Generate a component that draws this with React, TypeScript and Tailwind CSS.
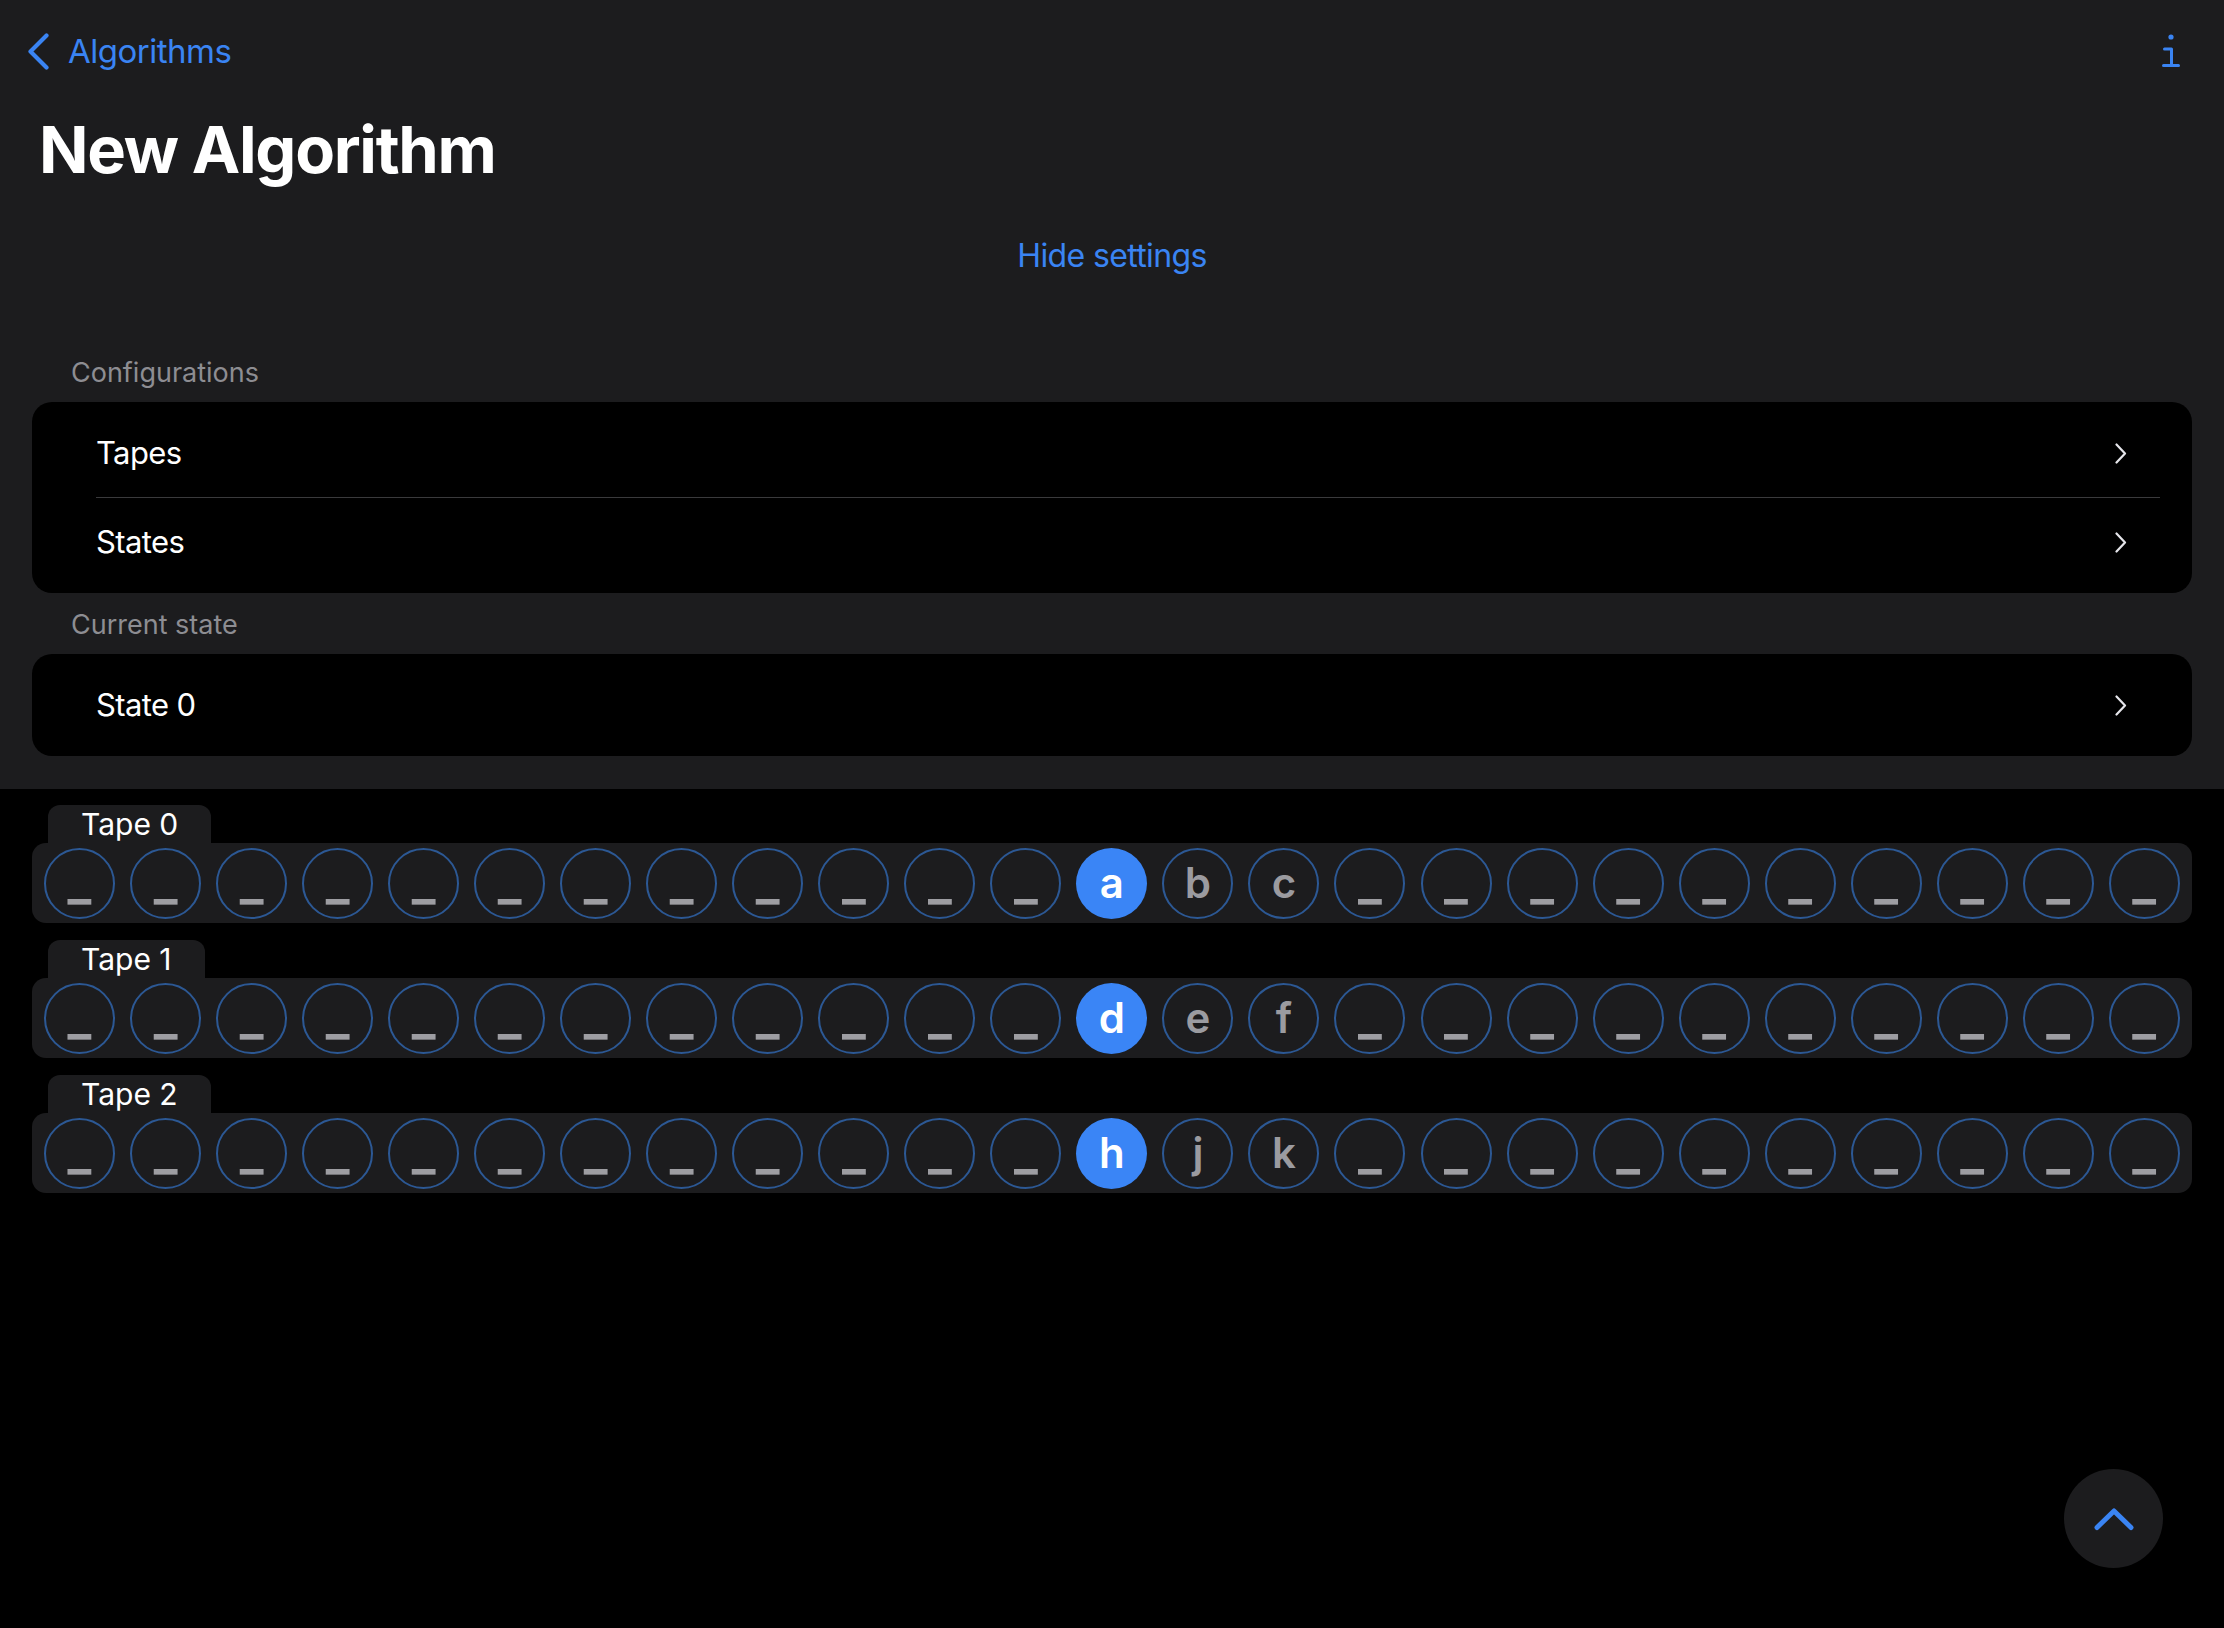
import React from "react";

const BLUE = "#3a84f3";

function RowChevron() {
  return (
    <svg width="12" height="21" viewBox="0 0 12 21" fill="none">
      <path d="M1.5 1.5 L10 10.5 L1.5 19.5" stroke="#e5e5ea" strokeWidth="2.2" strokeLinecap="round" strokeLinejoin="round" />
    </svg>
  );
}

function Row({ label }: { label: string }) {
  return (
    <div className="h-[88px] flex items-center justify-between pl-[64px] pr-[65px]">
      <span className="text-[31px] leading-[40px] tracking-[-0.02em] text-white">{label}</span>
      <RowChevron />
    </div>
  );
}

function Cell({ ch, head }: { ch: string; head?: boolean }) {
  if (head) {
    return (
      <div className="w-[71px] h-[71px] shrink-0 rounded-full bg-[#3a85f6] flex items-center justify-center">
        <span className="text-[42px] leading-[50px] font-semibold text-white">{ch}</span>
      </div>
    );
  }
  if (ch === "_") {
    return (
      <div className="w-[71px] h-[71px] shrink-0 rounded-full border-2 border-[#2c5894] flex items-center justify-center">
        <span className="text-[50px] leading-[56px] font-bold text-[#9d9da2] -translate-y-[2px]">_</span>
      </div>
    );
  }
  return (
    <div className="w-[71px] h-[71px] shrink-0 rounded-full border-2 border-[#2c5894] flex items-center justify-center">
      <span className="text-[42px] leading-[50px] font-semibold text-[#9b9ba0]">{ch}</span>
    </div>
  );
}

function Tape({ name, letters }: { name: string; letters: string[] }) {
  const cells: string[] = [];
  for (let i = 0; i < 25; i++) {
    if (i >= 12 && i < 12 + letters.length) cells.push(letters[i - 12]);
    else cells.push("_");
  }
  return (
    <div className="mx-[32px]">
      <div className="ml-[16px] inline-flex h-[38px] items-center px-[33px] rounded-t-[12px] bg-[#1c1c1e]">
        <span className="text-[30px] leading-[38px] text-white">{name}</span>
      </div>
      <div className="h-[80px] rounded-[14px] bg-[#1c1c1e] flex items-center justify-between px-[12px]">
        {cells.map((c, i) => (
          <Cell key={i} ch={c} head={i === 12} />
        ))}
      </div>
    </div>
  );
}

export default function App() {
  return (
    <div
      className="min-h-screen bg-black relative"
      style={{ fontFamily: "Inter, 'Noto Sans', sans-serif" }}
    >
      <div className="bg-[#1c1c1e] pb-[33px]">
        {/* nav */}
        <div className="pt-[31px] h-[71px] flex items-center justify-between pl-[27px] pr-[44px]">
          <div className="flex items-center gap-[18px] h-[40px]">
            <svg width="23" height="37" viewBox="0 0 23 37" fill="none">
              <path d="M19.5 2.5 L3.5 18.5 L19.5 34.5" stroke={BLUE} strokeWidth="4.2" strokeLinecap="round" strokeLinejoin="round" />
            </svg>
            <span className="text-[33px] leading-[40px] tracking-[-0.015em] text-[#3a84f3]">Algorithms</span>
          </div>
          <svg width="18" height="34" viewBox="0 0 18 34" fill="none">
            <circle cx="9" cy="3" r="2.6" fill={BLUE} />
            <path d="M2.5 15 H9.5 V31.5" stroke={BLUE} strokeWidth="3" strokeLinecap="round" strokeLinejoin="round" />
            <path d="M1.5 31.5 H16.5" stroke={BLUE} strokeWidth="3" strokeLinecap="round" />
          </svg>
        </div>
        {/* title */}
        <div className="mt-[39px] pl-[39px]">
          <h1 className="text-[65px] leading-[80px] font-bold tracking-[-0.02em] text-white">New Algorithm</h1>
        </div>
        <div className="mt-[46px] flex justify-center">
          <span className="text-[32px] leading-[40px] tracking-[-0.02em] text-[#3a84f3]">Hide settings</span>
        </div>
        <div className="mt-[80px] pl-[71px] text-[27px] leading-[34px] text-[#8d8d92]">Configurations</div>
        <div className="mt-[12px] mx-[32px] rounded-[20px] bg-black py-[7px]">
          <Row label="Tapes" />
          <div className="ml-[64px] mr-[32px] h-px bg-[#3a3a3c]" />
          <Row label="States" />
        </div>
        <div className="mt-[15px] pl-[71px] text-[27px] leading-[34px] text-[#8d8d92]">Current state</div>
        <div className="mt-[12px] mx-[32px] rounded-[20px] bg-black py-[7px]">
          <Row label="State 0" />
        </div>
      </div>

      <div className="pt-[16px] flex flex-col gap-[17px]">
        <Tape name="Tape 0" letters={["a", "b", "c"]} />
        <Tape name="Tape 1" letters={["d", "e", "f"]} />
        <Tape name="Tape 2" letters={["h", "j", "k"]} />
      </div>

      <button className="fixed right-[61px] bottom-[60px] w-[99px] h-[99px] rounded-full bg-[#1c1c1e] flex items-center justify-center">
        <svg width="40" height="24" viewBox="0 0 40 24" fill="none">
          <path d="M3 20.5 L20 4 L37 20.5" stroke={BLUE} strokeWidth="5" strokeLinecap="round" strokeLinejoin="round" />
        </svg>
      </button>
    </div>
  );
}
